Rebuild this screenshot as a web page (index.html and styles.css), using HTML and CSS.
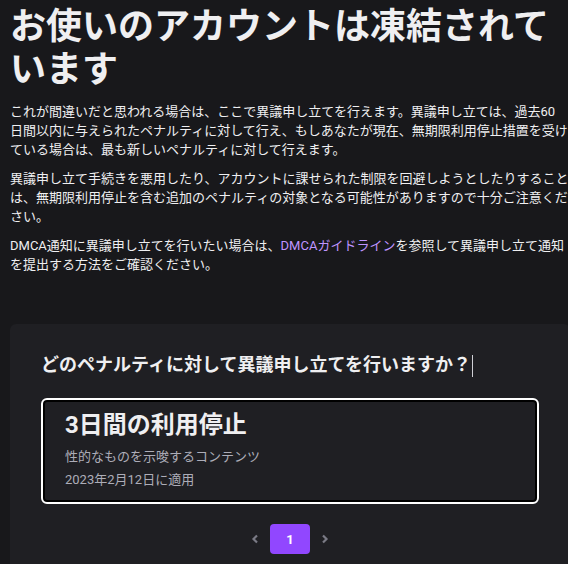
FILE: index.html
```html
<!DOCTYPE html>
<html lang="ja">
<head>
<meta charset="utf-8">
<title>お使いのアカウントは凍結されています</title>
<link rel="stylesheet" href="styles.css">
</head>
<body>
<main class="page">
  <h1 class="title">お使いのアカウントは凍結されています</h1>
  <p class="text">これが間違いだと思われる場合は、ここで異議申し立てを行えます。異議申し立ては、過去60<br>日間以内に与えられたペナルティに対して行え、もしあなたが現在、無期限利用停止措置を受けている場合は、最も新しいペナルティに対して行えます。</p>
  <p class="text">異議申し立て手続きを悪用したり、アカウントに課せられた制限を回避しようとしたりすることは、無期限利用停止を含む追加のペナルティの対象となる可能性がありますので十分ご注意ください。</p>
  <p class="text">DMCA通知に異議申し立てを行いたい場合は、<a class="link" href="#">DMCAガイドライン</a>を参照して異議申し立て通知を提出する方法をご確認ください。</p>
  <section class="card">
    <h2 class="question">どのペナルティに対して異議申し立てを行いますか？<span class="caret"></span></h2>
    <button class="penalty" type="button">
      <span class="penalty-title">3日間の利用停止</span>
      <span class="penalty-reason">性的なものを示唆するコンテンツ</span>
      <span class="penalty-date">2023年2月12日に適用</span>
    </button>
    <nav class="pager">
      <button class="pager-arrow" type="button" aria-label="前へ">
        <svg width="8" height="10" viewBox="0 0 8 10"><polyline points="6,1.5 2.5,5 6,8.5" fill="none" stroke="#7a7a85" stroke-width="2.2"/></svg>
      </button>
      <button class="pager-page" type="button">1</button>
      <button class="pager-arrow" type="button" aria-label="次へ">
        <svg width="8" height="10" viewBox="0 0 8 10"><polyline points="2,1.5 5.5,5 2,8.5" fill="none" stroke="#7a7a85" stroke-width="2.2"/></svg>
      </button>
    </nav>
  </section>
</main>
</body>
</html>
```

FILE: styles.css
```css
html, body {
  margin: 0;
  padding: 0;
  background: #18181b;
  overflow: hidden;
}

.page {
  width: 560px;
  padding: 6px 0 0 10px;
  font-family: Roboto, "Noto Sans CJK JP", sans-serif;
  color: #efeff1;
}

.title {
  margin: 0 0 10px;
  font-size: 36px;
  line-height: 43px;
  font-weight: 700;
}

.text {
  width: 559px;
  margin: 0 0 10px;
  font-size: 13px;
  line-height: 19px;
}

.link {
  color: #bf94ff;
  text-decoration: none;
}

.card {
  margin-top: 50px;
  padding: 29px 31px 30px;
  background: #1f1f23;
  border-radius: 6px;
}

.question {
  margin: 0 0 21px;
  font-size: 18px;
  line-height: 24px;
  font-weight: 700;
}

.caret {
  display: inline-block;
  width: 1px;
  height: 22px;
  margin-left: 1px;
  vertical-align: middle;
  background: #d0d0d6;
}

.penalty {
  display: flex;
  flex-direction: column;
  align-items: flex-start;
  box-sizing: border-box;
  width: 100%;
  height: 106px;
  padding: 11px 22px 11px;
  border: 2px solid #ffffff;
  border-radius: 6px;
  box-shadow: inset 0 0 0 2px #000000;
  background: #1f1f23;
  font-family: inherit;
  color: #efeff1;
  text-align: left;
  cursor: pointer;
}

.penalty-title {
  font-size: 24px;
  line-height: 29px;
  font-weight: 700;
}

.penalty-reason {
  margin-top: 7px;
  font-size: 13px;
  line-height: 19px;
  color: #adadb8;
}

.penalty-date {
  margin-top: 4px;
  font-size: 13px;
  line-height: 19px;
  color: #adadb8;
}

.pager {
  display: flex;
  justify-content: center;
  margin-top: 20px;
}

.pager-arrow {
  display: flex;
  align-items: center;
  justify-content: center;
  width: 30px;
  height: 30px;
  padding: 0;
  border: none;
  background: transparent;
}

.pager-page {
  width: 40px;
  height: 30px;
  padding: 0;
  border: none;
  border-radius: 4px;
  background: #9147ff;
  color: #ffffff;
  font-family: inherit;
  font-size: 13px;
  font-weight: 700;
}
```
